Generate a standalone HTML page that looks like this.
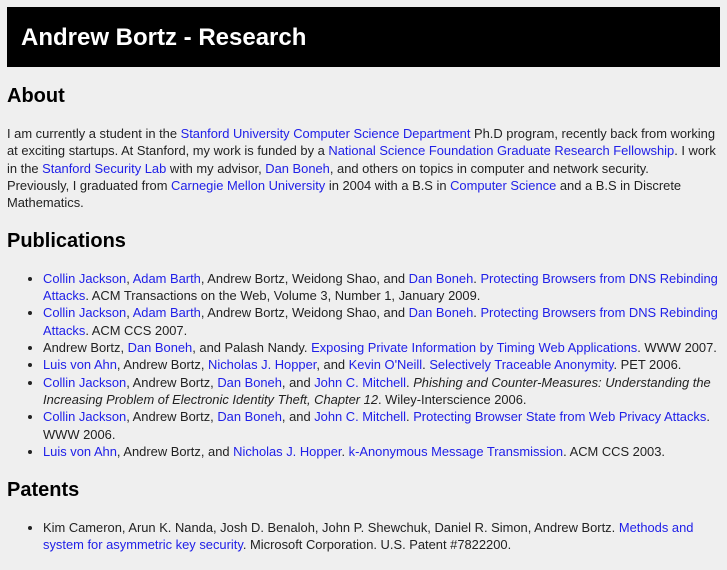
<!DOCTYPE html>
<html><head><meta charset="utf-8"><style>
body{margin:7px 6px 7px 7px;background:#efefef;font-family:"Liberation Sans",sans-serif;font-size:12.92px;line-height:17.35px;color:#222;}
h1{margin:0 1px 0 0;background:#000;color:#fff;height:60px;line-height:61px;padding-left:14px;font-size:24px;font-weight:bold;}
h2{font-size:20px;line-height:23px;margin:18px 0 17px 0;color:#000;}
p{margin:0 0 16.5px 0;}
ul{margin:0 0 16.5px 0;padding-left:36px;}
a{color:#2020e8;text-decoration:none;}
</style></head><body>
<h1>Andrew Bortz - Research</h1>
<h2>About</h2>
<p>I am currently a student in the <a>Stanford University Computer Science Department</a> Ph.D program, recently back from working at exciting startups. At Stanford, my work is funded by a <a>National Science Foundation Graduate Research Fellowship</a>. I work in the <a>Stanford Security Lab</a> with my advisor, <a>Dan Boneh</a>, and others on topics in computer and network security.<br>Previously, I graduated from <a>Carnegie Mellon University</a> in 2004 with a B.S in <a>Computer Science</a> and a B.S in Discrete Mathematics.</p>
<h2>Publications</h2>
<ul>
<li><a>Collin Jackson</a>, <a>Adam Barth</a>, Andrew Bortz, Weidong Shao, and <a>Dan Boneh</a>. <a>Protecting Browsers from DNS Rebinding Attacks</a>. ACM Transactions on the Web, Volume 3, Number 1, January 2009.</li>
<li><a>Collin Jackson</a>, <a>Adam Barth</a>, Andrew Bortz, Weidong Shao, and <a>Dan Boneh</a>. <a>Protecting Browsers from DNS Rebinding Attacks</a>. ACM CCS 2007.</li>
<li>Andrew Bortz, <a>Dan Boneh</a>, and Palash Nandy. <a>Exposing Private Information by Timing Web Applications</a>. WWW 2007.</li>
<li><a>Luis von Ahn</a>, Andrew Bortz, <a>Nicholas J. Hopper</a>, and <a>Kevin O'Neill</a>. <a>Selectively Traceable Anonymity</a>. PET 2006.</li>
<li><a>Collin Jackson</a>, Andrew Bortz, <a>Dan Boneh</a>, and <a>John C. Mitchell</a>. <i>Phishing and Counter-Measures: Understanding the Increasing Problem of Electronic Identity Theft, Chapter 12</i>. Wiley-Interscience 2006.</li>
<li><a>Collin Jackson</a>, Andrew Bortz, <a>Dan Boneh</a>, and <a>John C. Mitchell</a>. <a>Protecting Browser State from Web Privacy Attacks</a>. WWW 2006.</li>
<li><a>Luis von Ahn</a>, Andrew Bortz, and <a>Nicholas J. Hopper</a>. <a>k-Anonymous Message Transmission</a>. ACM CCS 2003.</li>
</ul>
<h2>Patents</h2>
<ul>
<li>Kim Cameron, Arun K. Nanda, Josh D. Benaloh, John P. Shewchuk, Daniel R. Simon, Andrew Bortz. <a>Methods and system for asymmetric key security</a>. Microsoft Corporation. U.S. Patent #7822200.</li>
</ul>
</body></html>
